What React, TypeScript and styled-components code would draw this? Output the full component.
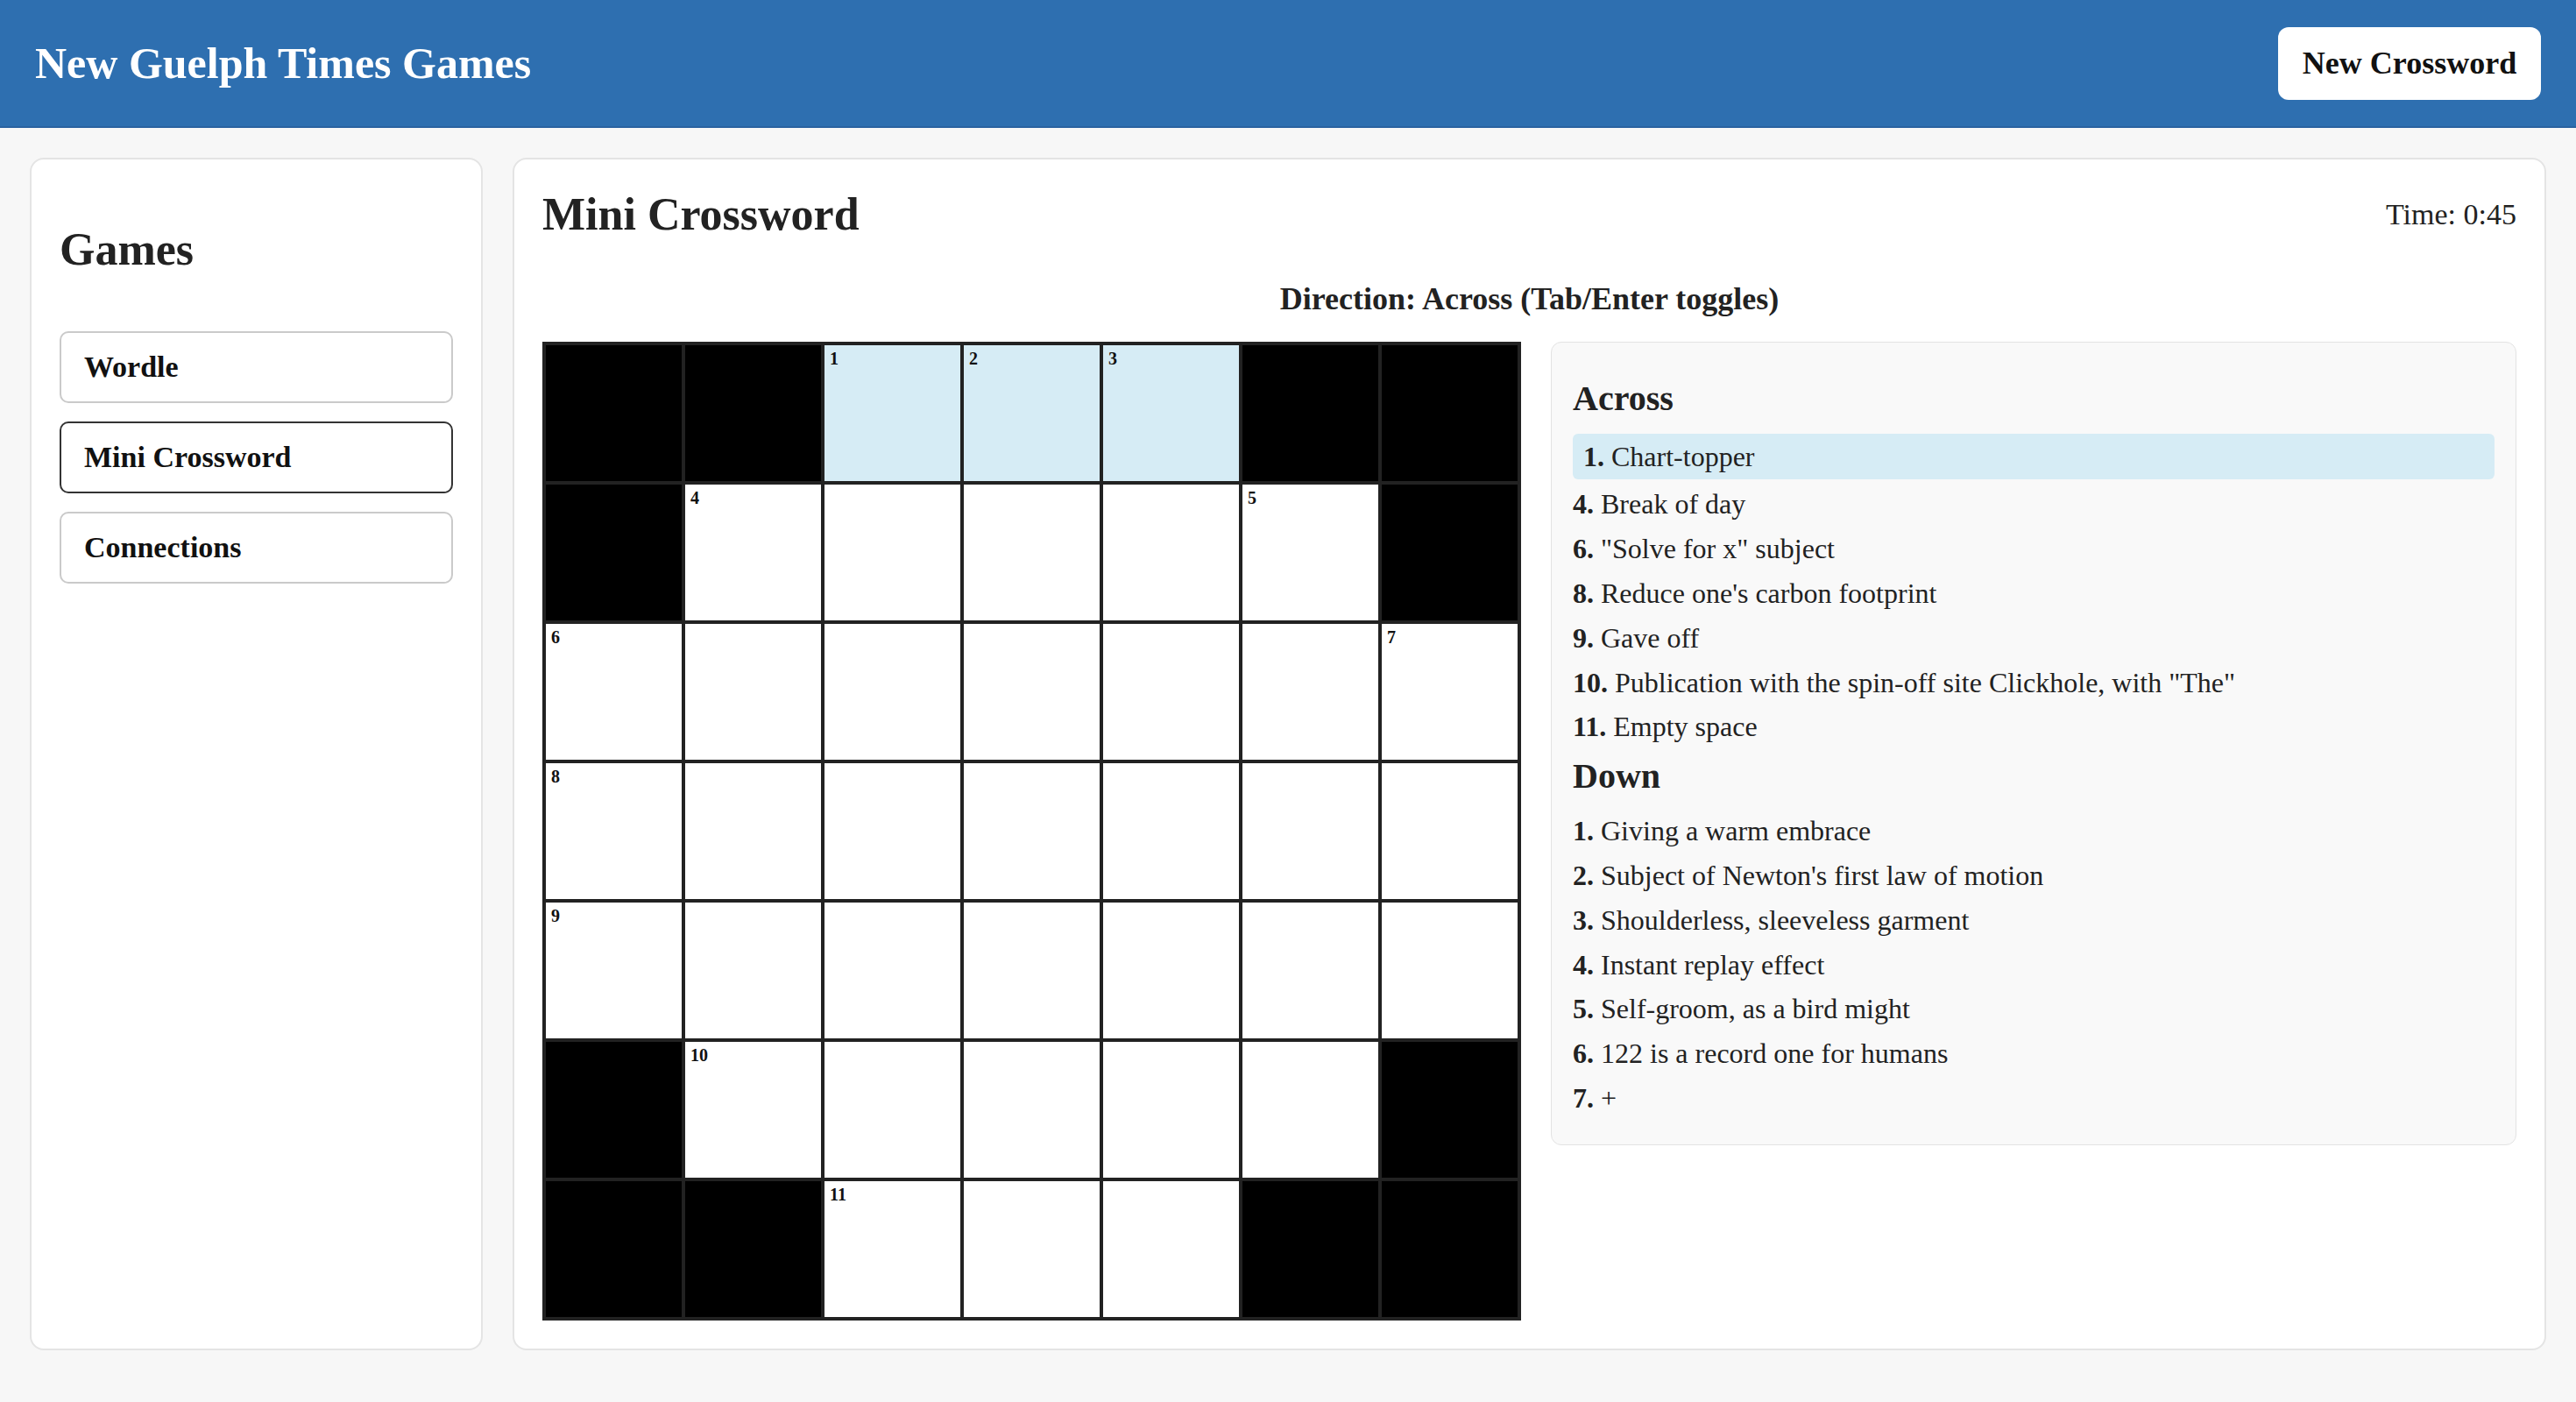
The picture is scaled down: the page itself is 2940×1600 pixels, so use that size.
import styled, { createGlobalStyle } from "styled-components"

const GlobalStyle = createGlobalStyle`
    * {
        box-sizing: border-box;
    }
    body {
        margin: 0;
        background: #f7f7f7;
        font-family: "Liberation Serif", "Times New Roman", serif;
        color: #222;
    }
`

const Header = styled.header`
    height: 146px;
    background: #2e6fb0;
    border-bottom: 2px solid #2a62a0;
    padding: 0 40px;
    display: flex;
    align-items: center;
    justify-content: space-between;
`
const SiteTitle = styled.h1`
    margin: 0;
    color: #fff;
    font-size: 50px;
    font-weight: 700;
    line-height: 1.2;
`
const HeaderButton = styled.button`
    font-family: inherit;
    font-size: 36px;
    font-weight: 700;
    color: #111;
    background: #fff;
    border: none;
    border-radius: 12px;
    width: 300px;
    height: 83px;
    cursor: pointer;
`

const Layout = styled.main`
    display: grid;
    grid-template-columns: 517px 1fr;
    gap: 34px;
    padding: 34px;
`
const Card = styled.section`
    background: #fff;
    border: 2px solid #e4e4e4;
    border-radius: 16px;
    padding: 32px;
`
const SideHeading = styled.h2`
    margin: 40px 0 62px;
    font-size: 52px;
    font-weight: 700;
    line-height: 1.2;
`
const GameList = styled.nav`
    display: flex;
    flex-direction: column;
    gap: 21px;
`
const GameButton = styled.button<{ $active?: boolean }>`
    font-family: inherit;
    font-size: 34px;
    font-weight: 700;
    color: #111;
    text-align: left;
    background: #fff;
    height: 82px;
    padding: 0 26px;
    border: 2px solid ${(p) => (p.$active ? "#333" : "#cacaca")};
    border-radius: 10px;
    cursor: pointer;
`

const TitleRow = styled.div`
    display: flex;
    align-items: center;
    justify-content: space-between;
    margin-bottom: 44px;
`
const PuzzleTitle = styled.h2`
    margin: 0;
    font-size: 52px;
    font-weight: 700;
    line-height: 1.2;
`
const Timer = styled.div`
    font-size: 34px;
    line-height: 1.2;
`
const Direction = styled.div`
    text-align: center;
    font-size: 36px;
    font-weight: 700;
    line-height: 1.2;
    margin-bottom: 26px;
`

const Board = styled.div`
    display: flex;
    align-items: flex-start;
    gap: 34px;
`
const Grid = styled.div`
    display: grid;
    grid-template-columns: repeat(7, 155px);
    grid-auto-rows: 155px;
    gap: 4px;
    padding: 4px;
    background: #222;
`
const Cell = styled.div<{ $block?: boolean; $hl?: boolean }>`
    position: relative;
    background: ${(p) => (p.$block ? "#000" : p.$hl ? "#d6ecf5" : "#fff")};
`
const CellNumber = styled.span`
    position: absolute;
    top: 4px;
    left: 6px;
    font-size: 20px;
    font-weight: 700;
    color: #111;
`

const CluePanel = styled.div`
    flex: 1;
    background: #f9f9f9;
    border: 1px solid #e3e3e3;
    border-radius: 12px;
    padding: 36px 24px 24px;
`
const ClueHeading = styled.h3<{ $gap?: number }>`
    margin: ${(p) => p.$gap ?? 4}px 0 16px;
    font-size: 40px;
    font-weight: 700;
    line-height: 1.2;
`
const ClueList = styled.ul`
    list-style: none;
    margin: 0;
    padding: 0;
`
const ClueItem = styled.li<{ $active?: boolean }>`
    font-size: 32px;
    line-height: 1.4;
    margin-bottom: 6px;
    padding: ${(p) => (p.$active ? "4px 12px" : "0")};
    background: ${(p) => (p.$active ? "#d6ecf5" : "transparent")};
    border-radius: 6px;
    cursor: pointer;
`

// # = block, . = open; numbers placed separately
const layout = [
    "##...##",
    "#.....#",
    ".......",
    ".......",
    ".......",
    "#.....#",
    "##...##",
]
const numbers: Record<string, number> = {
    "0-2": 1, "0-3": 2, "0-4": 3,
    "1-1": 4, "1-5": 5,
    "2-0": 6, "2-6": 7,
    "3-0": 8, "4-0": 9,
    "5-1": 10, "6-2": 11,
}

const across: [number, string][] = [
    [1, "Chart-topper"],
    [4, "Break of day"],
    [6, "\"Solve for x\" subject"],
    [8, "Reduce one's carbon footprint"],
    [9, "Gave off"],
    [10, "Publication with the spin-off site Clickhole, with \"The\""],
    [11, "Empty space"],
]
const down: [number, string][] = [
    [1, "Giving a warm embrace"],
    [2, "Subject of Newton's first law of motion"],
    [3, "Shoulderless, sleeveless garment"],
    [4, "Instant replay effect"],
    [5, "Self-groom, as a bird might"],
    [6, "122 is a record one for humans"],
    [7, "+"],
]

const App: React.FC = () => {
    const activeRow = 0
    const activeCols = [2, 3, 4]

    return (
        <>
            <GlobalStyle />
            <Header>
                <SiteTitle>New Guelph Times Games</SiteTitle>
                <HeaderButton>New Crossword</HeaderButton>
            </Header>
            <Layout>
                <Card>
                    <SideHeading>Games</SideHeading>
                    <GameList>
                        <GameButton>Wordle</GameButton>
                        <GameButton $active>Mini Crossword</GameButton>
                        <GameButton>Connections</GameButton>
                    </GameList>
                </Card>
                <Card>
                    <TitleRow>
                        <PuzzleTitle>Mini Crossword</PuzzleTitle>
                        <Timer>Time: 0:45</Timer>
                    </TitleRow>
                    <Direction>Direction: Across (Tab/Enter toggles)</Direction>
                    <Board>
                        <Grid>
                            {layout.map((row, r) =>
                                row.split("").map((ch, c) => {
                                    const num = numbers[`${r}-${c}`]
                                    return (
                                        <Cell
                                            key={`${r}-${c}`}
                                            $block={ch === "#"}
                                            $hl={r === activeRow && activeCols.includes(c)}
                                        >
                                            {num && <CellNumber>{num}</CellNumber>}
                                        </Cell>
                                    )
                                })
                            )}
                        </Grid>
                        <CluePanel>
                            <ClueHeading>Across</ClueHeading>
                            <ClueList>
                                {across.map(([n, text], i) => (
                                    <ClueItem key={n} $active={i === 0}>
                                        <strong>{n}.</strong> {text}
                                    </ClueItem>
                                ))}
                            </ClueList>
                            <ClueHeading $gap={10}>Down</ClueHeading>
                            <ClueList>
                                {down.map(([n, text]) => (
                                    <ClueItem key={n}>
                                        <strong>{n}.</strong> {text}
                                    </ClueItem>
                                ))}
                            </ClueList>
                        </CluePanel>
                    </Board>
                </Card>
            </Layout>
        </>
    )
}

export default App
